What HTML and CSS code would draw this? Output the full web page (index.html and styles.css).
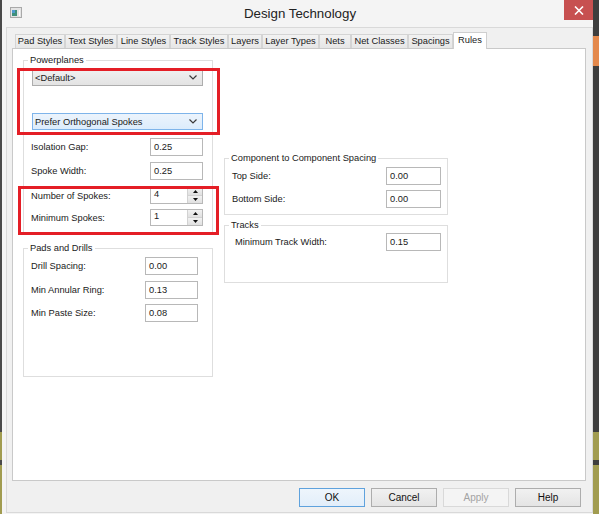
FILE: index.html
```html
<!DOCTYPE html>
<html lang="en">
  <head>
    <title>Design Technology</title>
    <meta charset="utf-8">
    <link rel="stylesheet" href="styles.css">
  </head>
  <body>

  <div class="window">
    <div class="titlebar">
      <svg class="app-icon" width="12" height="11" viewBox="0 0 12 11">
        <rect x="0.5" y="0.5" width="11" height="10" fill="#e4e4e4" stroke="#a9a9a9"/>
        <rect x="2" y="3" width="5" height="6" fill="#3f8f7c"/>
        <rect x="2" y="3" width="3" height="3" fill="#4f9ad0"/>
        <rect x="9" y="3" width="1" height="6" fill="#ffffff"/>
      </svg>
      <div class="caption">Design Technology</div>
      <div class="close">
        <svg width="10" height="9" viewBox="0 0 10 9">
          <path d="M1 0.5 L9 8.5 M9 0.5 L1 8.5" stroke="#ffffff" stroke-width="1.6"/>
        </svg>
      </div>
    </div>

    <div class="client">
      <div class="tabs">
        <div class="tab t-pad">Pad Styles</div>
        <div class="tab t-text">Text Styles</div>
        <div class="tab t-line">Line Styles</div>
        <div class="tab t-track">Track Styles</div>
        <div class="tab t-layers">Layers</div>
        <div class="tab t-types">Layer Types</div>
        <div class="tab t-nets">Nets</div>
        <div class="tab t-classes">Net Classes</div>
        <div class="tab t-spacings">Spacings</div>
        <div class="tab t-rules active">Rules</div>
      </div>

      <div class="panel">
        <div class="col col-left">
          <div class="group powerplanes">
            <div class="group-title">Powerplanes</div>
            <div class="combo">
              <span>&lt;Default&gt;</span>
              <svg width="8" height="5" viewBox="0 0 8 5"><path d="M0.5 0.5 L4 4 L7.5 0.5" fill="none" stroke="#3a3a3a" stroke-width="1.2"/></svg>
            </div>
            <div class="combo combo-hot">
              <span>Prefer Orthogonal Spokes</span>
              <svg width="8" height="5" viewBox="0 0 8 5"><path d="M0.5 0.5 L4 4 L7.5 0.5" fill="none" stroke="#3a3a3a" stroke-width="1.2"/></svg>
            </div>
            <div class="row r-iso"><span>Isolation Gap:</span><div class="edit">0.25</div></div>
            <div class="row r-spoke"><span>Spoke Width:</span><div class="edit">0.25</div></div>
            <div class="row r-num">
              <span>Number of Spokes:</span>
              <div class="edit spin"><span>4</span>
                <div class="spin-btns">
                  <div class="spin-btn"><svg width="5" height="3" viewBox="0 0 5 3"><path d="M0 3 L2.5 0 L5 3 Z" fill="#111"/></svg></div>
                  <div class="spin-btn"><svg width="5" height="3" viewBox="0 0 5 3"><path d="M0 0 L2.5 3 L5 0 Z" fill="#111"/></svg></div>
                </div>
              </div>
            </div>
            <div class="row r-min">
              <span>Minimum Spokes:</span>
              <div class="edit spin"><span>1</span>
                <div class="spin-btns">
                  <div class="spin-btn"><svg width="5" height="3" viewBox="0 0 5 3"><path d="M0 3 L2.5 0 L5 3 Z" fill="#111"/></svg></div>
                  <div class="spin-btn"><svg width="5" height="3" viewBox="0 0 5 3"><path d="M0 0 L2.5 3 L5 0 Z" fill="#111"/></svg></div>
                </div>
              </div>
            </div>
          </div>

          <div class="group pads">
            <div class="group-title">Pads and Drills</div>
            <div class="row r-drill"><span>Drill Spacing:</span><div class="edit">0.00</div></div>
            <div class="row r-ring"><span>Min Annular Ring:</span><div class="edit">0.13</div></div>
            <div class="row r-paste"><span>Min Paste Size:</span><div class="edit">0.08</div></div>
          </div>
        </div>

        <div class="col col-right">
          <div class="group spacing">
            <div class="group-title">Component to Component Spacing</div>
            <div class="row r-top"><span>Top Side:</span><div class="edit">0.00</div></div>
            <div class="row r-bottom"><span>Bottom Side:</span><div class="edit">0.00</div></div>
          </div>

          <div class="group tracks">
            <div class="group-title">Tracks</div>
            <div class="row r-track"><span>Minimum Track Width:</span><div class="edit">0.15</div></div>
          </div>
        </div>

        <!-- red highlight boxes drawn over the dialog -->
        <div class="mark mark-planes"></div>
        <div class="mark mark-spokes"></div>
      </div>

      <div class="buttons">
        <div class="btn btn-default">OK</div>
        <div class="btn">Cancel</div>
        <div class="btn btn-disabled">Apply</div>
        <div class="btn">Help</div>
      </div>
    </div>
  </div>

  </body>
</html>
```

FILE: styles.css
```css
html {
  height: 100%;
}
body {
  margin: 0;
  padding: 0;
  width: 599px;
  height: 514px;
  overflow: hidden;
  font-family: "Liberation Sans", Arial, sans-serif;
  font-size: 9.3px;
  line-height: 12px;
  color: #1a1a1a;
  background-color: #464646;
  background-image:
    linear-gradient(#4a4a4a 0 432px, #a19c50 432px 460px, #4a4a4a 460px 465px, #a19c50 465px),
    linear-gradient(#3e3e3e 0 36px, #e4894c 36px 66px, #3e3e3e 66px 432px, #a19c50 432px 460px, #3e3e3e 460px 465px, #a19c50 465px);
  background-size: 2px 100%, 6px 100%;
  background-position: left top, right top;
  background-repeat: no-repeat;
}

.window {
  margin-left: 2px;
  width: 591px;
  height: 514px;
  background: #f4f4f4;
}

/* title bar */
.titlebar {
  height: 27px;
  display: grid;
  grid-template-columns: 1fr auto 1fr;
  align-items: start;
}
.app-icon {
  margin: 7px 0 0 8px;
}
.caption {
  font-size: 13.3px;
  line-height: 16px;
  color: #222;
  padding: 6px 0 0 5px;
}
.close {
  justify-self: end;
  width: 29px;
  height: 20px;
  background: #c75050;
  display: flex;
  align-items: center;
  justify-content: center;
}

/* client area */
.client {
  margin-left: 4px;
  width: 587px;
  height: 486px;
  box-sizing: border-box;
  border: 1px solid #d9d9d9;
  background: #f0f0f0;
  padding: 4px 0 0 5px;
}

.tabs {
  display: flex;
  align-items: flex-end;
  height: 16px;
  margin-left: 3px;
}
.tab {
  height: 14px;
  box-sizing: border-box;
  border: 1px solid #d4d4d4;
  border-bottom: none;
  background: linear-gradient(#f2f2f2, #e6e6e6);
  line-height: 13px;
  text-align: center;
  white-space: nowrap;
}
.tab.active {
  position: relative;
  z-index: 1;
  height: 17px;
  margin-bottom: -1px;
  background: #fff;
  border-color: #cfcfcf;
  line-height: 14px;
}
.t-pad { width: 50px; }
.t-text { width: 52px; }
.t-line { width: 53px; }
.t-track { width: 58px; }
.t-layers { width: 34px; }
.t-types { width: 57px; }
.t-nets { width: 32px; }
.t-classes { width: 57px; }
.t-spacings { width: 45px; }
.t-rules { width: 34px; }

.panel {
  position: relative;
  width: 574px;
  height: 433px;
  box-sizing: border-box;
  border: 1px solid #c9c9c9;
  background: #fff;
  padding: 11px 0 0 10px;
  display: flex;
  align-items: flex-start;
  gap: 11px;
}

.col-left {
  width: 190px;
}
.col-right {
  width: 224px;
  margin-top: 98px;
}

/* group boxes */
.group {
  border: 1px solid #dedede;
  padding: 0 9px 0 7px;
}
.group-title {
  width: max-content;
  margin: -7px 0 0 -3px;
  padding: 0 2px;
  background: #fff;
  line-height: 12px;
}
.powerplanes {
  height: 175px;
  box-sizing: border-box;
  padding-right: 9px;
}
.pads {
  margin-top: 13px;
  height: 129px;
  box-sizing: border-box;
  padding-right: 14px;
}
.spacing {
  height: 57px;
  box-sizing: border-box;
  padding-right: 6px;
}
.tracks {
  margin-top: 10px;
  height: 58px;
  box-sizing: border-box;
  padding: 0 6px 0 10px;
}
.tracks .group-title {
  margin-left: -6px;
}

.combo {
  height: 17px;
  box-sizing: border-box;
  margin: 3px 0 0 1px;
  border: 1px solid #adadad;
  background: linear-gradient(#f0f0f0, #e3e3e3);
  display: flex;
  align-items: center;
  justify-content: space-between;
  padding: 0 5px 0 2px;
}
.combo-hot {
  margin-top: 27px;
  border-color: #7eb4ea;
  background: linear-gradient(#ecf4fc, #dcecfc);
}

.row {
  display: flex;
  align-items: center;
  justify-content: space-between;
}
.r-iso { margin-top: 8px; }
.r-spoke { margin-top: 6px; }
.r-num { margin-top: 7px; }
.r-min { margin-top: 5px; }
.r-drill { margin-top: 3px; }
.r-ring { margin-top: 6px; }
.r-paste { margin-top: 5px; }
.r-top { margin-top: 3px; }
.r-bottom { margin-top: 5px; }
.r-track { margin-top: 2px; }

.edit {
  width: 53px;
  height: 18px;
  box-sizing: border-box;
  border: 1px solid #b8b8b8;
  background: #fff;
  padding: 2px 0 0 3px;
  line-height: 12px;
}
.spacing .edit,
.tracks .edit {
  width: 55px;
}
.spin {
  height: 17px;
  display: flex;
  justify-content: space-between;
  padding: 0 0 0 3px;
  line-height: 13px;
}
.spin-btns {
  width: 15px;
  display: flex;
  flex-direction: column;
}
.spin-btn {
  flex: 1;
  background: linear-gradient(#f2f2f2, #e0e0e0);
  border-left: 1px solid #d2d2d2;
  border-bottom: 1px solid #d2d2d2;
  display: flex;
  align-items: center;
  justify-content: center;
}
.spin-btn:last-child {
  border-bottom: none;
}

/* red annotation boxes */
.mark {
  position: absolute;
  border: 3px solid #e41e26;
  box-sizing: border-box;
}
.mark-planes {
  left: 4px;
  top: 19px;
  width: 203px;
  height: 67px;
}
.mark-spokes {
  left: 5px;
  top: 137px;
  width: 201px;
  height: 49px;
}

/* dialog buttons */
.buttons {
  display: flex;
  justify-content: flex-end;
  gap: 6px;
  margin: 7px 11px 0 0;
}
.btn {
  width: 66px;
  height: 19px;
  box-sizing: border-box;
  border: 1px solid #adadad;
  background: linear-gradient(#f1f1f1, #e4e4e4);
  text-align: center;
  line-height: 17px;
  font-size: 10px;
  color: #111;
}
.btn-default {
  border-color: #5fa2dd;
  background: linear-gradient(#eef5fc, #e2eefa);
}
.btn-disabled {
  border-color: #d9d9d9;
  background: #f4f4f4;
  color: #a3a3a3;
}
```
